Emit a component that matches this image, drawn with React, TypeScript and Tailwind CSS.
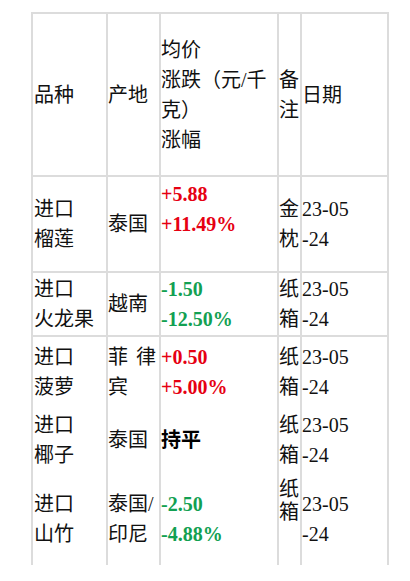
import React from "react";

type Row = {
  name: string[];
  origin: string[];
  price: { text: string; tone: "up" | "down" | "flat" }[];
  note: string[];
  date: string[];
  height: string;
  border: boolean;
  noteTop?: boolean;
};

const rows: Row[] = [
  {
    name: ["进口", "榴莲"],
    origin: ["泰国"],
    price: [
      { text: "+5.88", tone: "up" },
      { text: "+11.49%", tone: "up" },
      { text: "\u00a0", tone: "up" },
    ],
    note: ["金", "枕"],
    date: ["23-05", "-24"],
    height: "h-[96px]",
    border: true,
  },
  {
    name: ["进口", "火龙果"],
    origin: ["越南"],
    price: [
      { text: "-1.50", tone: "down" },
      { text: "-12.50%", tone: "down" },
    ],
    note: ["纸", "箱"],
    date: ["23-05", "-24"],
    height: "h-[64px]",
    border: true,
  },
  {
    name: ["进口", "菠萝"],
    origin: ["菲 律", "宾"],
    price: [
      { text: "+0.50", tone: "up" },
      { text: "+5.00%", tone: "up" },
    ],
    note: ["纸", "箱"],
    date: ["23-05", "-24"],
    height: "h-[70px]",
    border: false,
  },
  {
    name: ["进口", "椰子"],
    origin: ["泰国"],
    price: [{ text: "持平", tone: "flat" }],
    note: ["纸", "箱"],
    date: ["23-05", "-24"],
    height: "h-[66px]",
    border: false,
  },
  {
    name: ["进口", "山竹"],
    origin: ["泰国/", "印尼"],
    price: [
      { text: "-2.50", tone: "down" },
      { text: "-4.88%", tone: "down" },
    ],
    note: ["纸", "箱"],
    date: ["23-05", "-24"],
    height: "h-[92px]",
    border: false,
    noteTop: true,
  },
];

const toneClass = {
  up: "text-[#e60012] font-bold",
  down: "text-[#12a052] font-bold",
  flat: "text-black font-bold",
};

function Lines({ lines, className = "" }: { lines: string[]; className?: string }) {
  return (
    <>
      {lines.map((l, i) =>
        l === "菲 律" ? (
          <div key={i} className={"flex justify-between " + className}>
            <span>菲</span>
            <span>律</span>
          </div>
        ) : (
          <div key={i} className={className}>
            {l}
          </div>
        )
      )}
    </>
  );
}

export default function App() {
  const cell = "border-r-2 border-[#dcdcdc] align-middle p-0 whitespace-nowrap";
  return (
    <div className="min-h-[581px] bg-white pt-[12px] pl-[31px] [font-family:'Liberation_Serif','Noto_Sans_CJK_SC',serif] text-[20px] leading-[30px] text-[#111]">
      <table className="table-fixed border-separate border-spacing-0 border-l-2 border-t-2 border-[#dcdcdc] w-[358px]">
        <colgroup>
          <col className="w-[75px]" />
          <col className="w-[53px]" />
          <col className="w-[118px]" />
          <col className="w-[23px]" />
          <col className="w-[87px]" />
        </colgroup>
        <thead>
          <tr className="h-[163px]">
            <th className={cell + " border-b-2 text-left font-normal pl-px"}>品种</th>
            <th className={cell + " border-b-2 text-left font-normal"}>产地</th>
            <th className={cell + " border-b-2 text-left font-normal"}>
              <Lines lines={["均价", "涨跌（元/千", "克）", "涨幅"]} />
            </th>
            <th className={cell + " border-b-2 text-left font-normal"}>
              <Lines lines={["备", "注"]} />
            </th>
            <th className={cell + " border-b-2 text-left font-normal"}>日期</th>
          </tr>
        </thead>
        <tbody>
          {rows.map((r, i) => {
            const b = r.border ? " border-b-2" : "";
            return (
              <tr key={i} className={r.height}>
                <td className={cell + b + " pl-px"}>
                  <Lines lines={r.name} />
                </td>
                <td className={cell + b + " pr-[3px]"}>
                  <Lines lines={r.origin} />
                </td>
                <td className={cell + b}>
                  {r.price.map((p, j) => (
                    <div key={j} className={toneClass[p.tone]}>
                      {p.text}
                    </div>
                  ))}
                </td>
                <td className={cell + b + (r.noteTop ? " !align-top pt-[5px]" : "")}>
                  <Lines lines={r.note} className={r.noteTop ? "leading-[23px]" : ""} />
                </td>
                <td className={cell + b}>
                  <Lines lines={r.date} />
                </td>
              </tr>
            );
          })}
        </tbody>
      </table>
    </div>
  );
}
